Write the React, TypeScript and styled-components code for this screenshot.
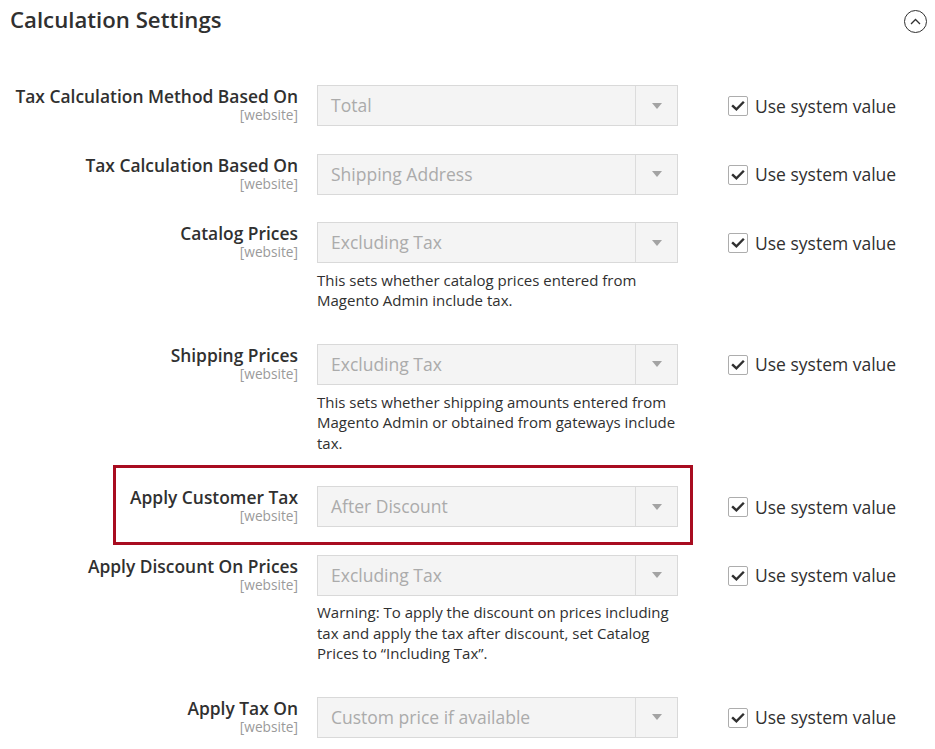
import React from "react";
import styled, { createGlobalStyle } from "styled-components";

const GlobalStyle = createGlobalStyle`
  html, body {
    margin: 0;
    padding: 0;
    background: #ffffff;
  }
  body {
    font-family: "Open Sans", "Liberation Sans", sans-serif;
    color: #303030;
  }
`;

const Page = styled.div`
  width: 935px;
  box-sizing: border-box;
`;

const Header = styled.div`
  display: flex;
  align-items: center;
  justify-content: space-between;
  height: 40px;
  padding: 0 8px 0 10px;
`;

const Title = styled.h2`
  margin: 0;
  font-size: 22.2px;
  font-weight: 600;
  line-height: 26px;
  color: #303030;
`;

const CollapseButton = styled.div`
  width: 23px;
  height: 23px;
  box-sizing: border-box;
  border: 1.3px solid #303030;
  border-radius: 50%;
  display: flex;
  align-items: center;
  justify-content: center;
  margin-top: 2px;
`;

const Form = styled.div`
  padding-top: 45px;
`;

const Row = styled.div<{ $hasNote?: boolean }>`
  position: relative;
  display: grid;
  grid-template-columns: 317px 361px 1fr;
  align-items: start;
  padding-bottom: ${(p) => (p.$hasNote ? "0" : "27.5px")};
`;

const LabelCell = styled.div`
  text-align: right;
  padding: 1px 19px 0 0;
`;

const LabelText = styled.span`
  display: block;
  font-size: 17.4px;
  font-weight: 600;
  line-height: 20px;
  color: #303030;
  white-space: nowrap;
`;

const Scope = styled.span`
  display: block;
  font-size: 13.7px;
  line-height: 17px;
  color: #9a9a9a;
`;

const ControlCell = styled.div`
  display: flex;
  flex-direction: column;
`;

const Select = styled.div`
  height: 41px;
  box-sizing: border-box;
  border: 1px solid #d9d9d9;
  background: #f4f4f4;
  display: flex;
`;

const SelectValue = styled.div`
  flex: 1;
  padding-left: 13px;
  font-size: 17.5px;
  line-height: 39px;
  color: #ababab;
  white-space: nowrap;
`;

const ArrowBox = styled.div`
  width: 42px;
  box-sizing: border-box;
  border-left: 1px solid #dcdcdc;
  display: flex;
  align-items: center;
  justify-content: center;
`;

const Arrow = styled.span`
  width: 0;
  height: 0;
  margin-left: 1px;
  border-left: 5px solid transparent;
  border-right: 5px solid transparent;
  border-top: 6px solid #a3a3a3;
`;

const Note = styled.div`
  margin: 6.75px 0 33px;
  font-size: 15px;
  line-height: 20.5px;
  color: #303030;
  white-space: nowrap;
`;

const CheckCell = styled.label`
  height: 41px;
  padding-left: 50px;
  display: flex;
  align-items: center;
  gap: 7px;
`;

const CheckBox = styled.span`
  width: 20px;
  height: 20px;
  box-sizing: border-box;
  border: 1px solid #adadad;
  border-radius: 2px;
  background: #ffffff;
  display: flex;
  align-items: center;
  justify-content: center;
  margin-top: 1px;
`;

const CheckLabel = styled.span`
  font-size: 17.5px;
  line-height: 20px;
  color: #303030;
  white-space: nowrap;
`;

const Highlight = styled.div`
  position: absolute;
  left: 113px;
  top: -21px;
  width: 580px;
  height: 80px;
  box-sizing: border-box;
  border: 3px solid #a80c20;
  pointer-events: none;
`;

type Field = {
  label: string;
  value: string;
  note?: React.ReactNode;
  highlight?: boolean;
};

const fields: Field[] = [
  { label: "Tax Calculation Method Based On", value: "Total" },
  { label: "Tax Calculation Based On", value: "Shipping Address" },
  {
    label: "Catalog Prices",
    value: "Excluding Tax",
    note: (
      <>
        This sets whether catalog prices entered from
        <br />
        Magento Admin include tax.
      </>
    ),
  },
  {
    label: "Shipping Prices",
    value: "Excluding Tax",
    note: (
      <>
        This sets whether shipping amounts entered from
        <br />
        Magento Admin or obtained from gateways include
        <br />
        tax.
      </>
    ),
  },
  { label: "Apply Customer Tax", value: "After Discount", highlight: true },
  {
    label: "Apply Discount On Prices",
    value: "Excluding Tax",
    note: (
      <>
        Warning: To apply the discount on prices including
        <br />
        tax and apply the tax after discount, set Catalog
        <br />
        Prices to “Including Tax”.
      </>
    ),
  },
  { label: "Apply Tax On", value: "Custom price if available" },
];

const CheckIcon = () => (
  <svg width="14" height="12" viewBox="0 0 14 12">
    <path
      d="M2 6.2 L5.4 9.4 L12 2.6"
      fill="none"
      stroke="#303030"
      strokeWidth="2.4"
      strokeLinecap="square"
    />
  </svg>
);

const ChevronUp = () => (
  <svg width="11" height="7" viewBox="0 0 11 7">
    <path d="M1 6 L5.5 1.5 L10 6" fill="none" stroke="#303030" strokeWidth="1.3" />
  </svg>
);

export default function App() {
  return (
    <Page>
      <GlobalStyle />
      <Header>
        <Title>Calculation Settings</Title>
        <CollapseButton>
          <ChevronUp />
        </CollapseButton>
      </Header>
      <Form>
        {fields.map((f) => (
          <Row key={f.label} $hasNote={!!f.note}>
            <LabelCell>
              <LabelText>{f.label}</LabelText>
              <Scope>[website]</Scope>
            </LabelCell>
            <ControlCell>
              <Select>
                <SelectValue>{f.value}</SelectValue>
                <ArrowBox>
                  <Arrow />
                </ArrowBox>
              </Select>
              {f.note && <Note>{f.note}</Note>}
            </ControlCell>
            <CheckCell>
              <CheckBox>
                <CheckIcon />
              </CheckBox>
              <CheckLabel>Use system value</CheckLabel>
            </CheckCell>
            {f.highlight && <Highlight />}
          </Row>
        ))}
      </Form>
    </Page>
  );
}
